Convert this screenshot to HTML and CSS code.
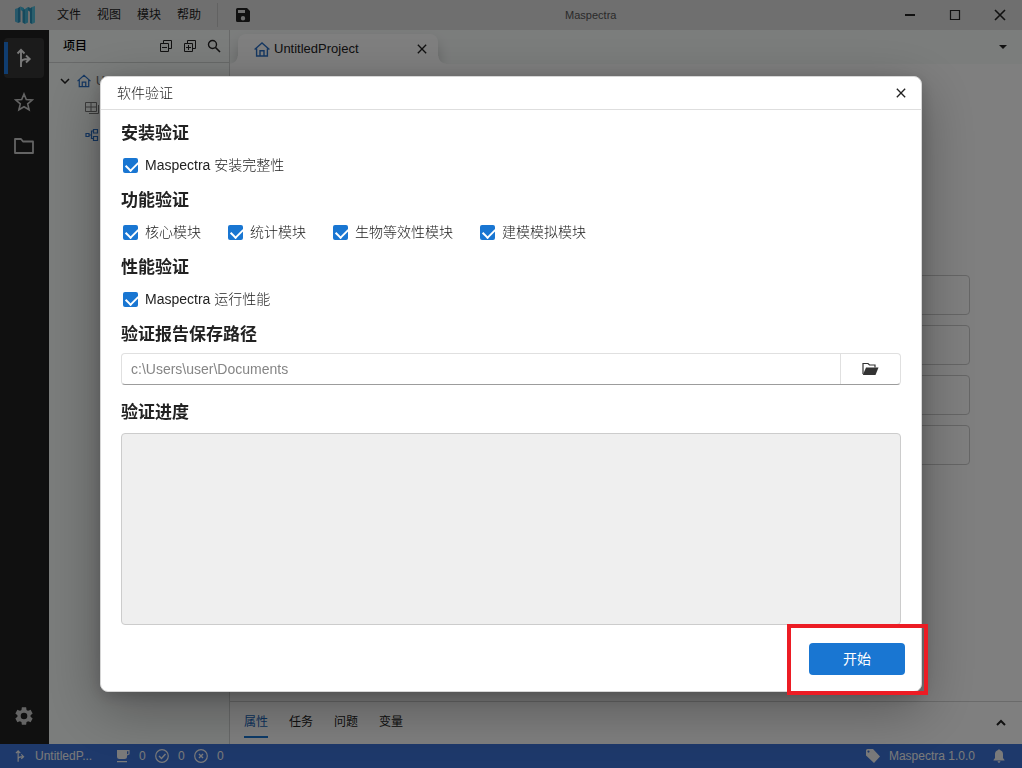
FILE: index.html
```html
<!DOCTYPE html>
<html lang="zh-CN">
<head>
<meta charset="utf-8">
<meta name="viewport" content="width=device-width, initial-scale=1">
<title>Maspectra</title>
<link rel="stylesheet" href="styles.css">
</head>
<body>
<svg class="sprite" aria-hidden="true">
  <symbol id="i-close" viewBox="0 0 12 12"><path d="M1 1l10 10M11 1L1 11" fill="none" stroke="currentColor" stroke-width="1.6"/></symbol>
  <symbol id="i-home" viewBox="0 0 16 15"><path d="M.6 7.600L8 1l7.400 6.600M2.600 6.400V14h10.800V6.400M6 14V8.700h4V14" fill="none" stroke="currentColor" stroke-width="1.400"/></symbol>
  <symbol id="i-branch" viewBox="0 0 16 20"><path d="M5 19V3M1.500 5.500L5 1.800l3.500 3.700M5 15c0-3 2-4 8-4M10 7.500l3.700 3.500-3.700 3.500" fill="none" stroke="currentColor" stroke-width="1.900"/></symbol>
</svg>

<div class="app">
  <header class="titlebar">
    <svg class="logo" viewBox="0 0 20 18" aria-hidden="true">
      <path d="M0 3l3-1v15l-3-1.500z" fill="#4fb0d4"/><path d="M3 2l2.500-1.500V16L3 17z" fill="#2a8cb8"/>
      <path d="M5.500.5L9 2v4L5.500 4z" fill="#3fb4d8"/>
      <path d="M7.500 4L10 3v15l-2.500-1.500z" fill="#2a94ba"/><path d="M10 3l3-2v15.500L10 18z" fill="#46b0d0"/>
      <path d="M13 1l2.500 1v4L13 4.500z" fill="#2a94ba"/>
      <path d="M15 2.500L17 1v17l-2-1z" fill="#2a90b8"/><path d="M17 1l3-1v16.500L17 18z" fill="#55bcd8"/>
    </svg>
    <nav class="menu" aria-label="主菜单">
      <button type="button">文件</button>
      <button type="button">视图</button>
      <button type="button">模块</button>
      <button type="button">帮助</button>
    </nav>
    <button class="save" type="button" aria-label="保存">
      <svg width="14" height="14" viewBox="0 0 14 14"><path fill="currentColor" fill-rule="evenodd" d="M1.500 0H11l3 3v9.500q0 1.500-1.500 1.500h-11Q0 14 0 12.500v-11Q0 0 1.500 0zM2 2v3h7V2zM7 8a2.200 2.200 0 1 0 0 4.400A2.200 2.200 0 0 0 7 8z"/></svg>
    </button>
    <h1 class="app-title">Maspectra</h1>
    <div class="window-buttons">
      <button type="button" aria-label="最小化"><svg width="12" height="12" viewBox="0 0 12 12"><path d="M1 6h10" stroke="currentColor" stroke-width="2"/></svg></button>
      <button type="button" aria-label="最大化"><svg width="12" height="12" viewBox="0 0 12 12"><path d="M1.500 1.500h9v9h-9z" fill="none" stroke="currentColor" stroke-width="1.200"/></svg></button>
      <button type="button" aria-label="关闭"><svg width="12" height="12"><use href="#i-close"/></svg></button>
    </div>
  </header>

  <div class="workspace">
    <nav class="rail" aria-label="侧边栏">
      <button class="rail-item active" type="button" aria-label="项目"><svg width="16" height="20"><use href="#i-branch"/></svg></button>
      <button class="rail-item" type="button" aria-label="收藏"><svg width="20" height="20" viewBox="0 0 20 20"><path d="M10 2l2.300 5.500 6 .5-4.600 3.900 1.400 5.900L10 14.700l-5.100 3.100 1.400-5.900L1.700 8l6-.5z" fill="none" stroke="currentColor" stroke-width="1.600"/></svg></button>
      <button class="rail-item" type="button" aria-label="文件夹"><svg width="20" height="16" viewBox="0 0 20 16"><path d="M1 1h6l2 2.500h10V15H1z" fill="none" stroke="currentColor" stroke-width="1.800" stroke-linejoin="round"/></svg></button>
      <button class="rail-item bottom" type="button" aria-label="设置"><svg width="22" height="22" viewBox="0 0 24 24"><path fill="currentColor" d="M19.140 12.940c.04-.3.060-.61.060-.94s-.02-.64-.07-.94l2.030-1.580c.18-.14.230-.41.120-.61l-1.920-3.320c-.12-.22-.37-.29-.59-.22l-2.390.96c-.5-.38-1.030-.7-1.620-.94l-.36-2.540c-.04-.24-.24-.41-.48-.41h-3.840c-.24 0-.43.17-.47.41l-.36 2.540c-.59.24-1.130.57-1.620.94l-2.390-.96c-.22-.08-.47 0-.59.22L2.740 8.870c-.12.210-.08.470.12.610l2.030 1.580c-.05.3-.09.630-.09.940s.02.640.07.940l-2.030 1.580c-.18.140-.23.410-.12.610l1.920 3.320c.12.220.370.290.590.220l2.390-.96c.5.380 1.030.7 1.620.94l.36 2.540c.05.240.240.410.480.410h3.840c.240 0 .440-.17.470-.41l.36-2.540c.590-.24 1.130-.56 1.620-.94l2.390.96c.220.080.470 0 .590-.22l1.920-3.320c.120-.22.070-.47-.12-.61zM12 15.600A3.600 3.600 0 1 1 12 8.400a3.600 3.600 0 0 1 0 7.200z"/></svg></button>
    </nav>

    <aside class="project">
      <div class="project-head">
        <h2>项目</h2>
        <div class="tools">
          <button type="button" aria-label="全部折叠"><svg width="14" height="14" viewBox="0 0 14 14"><path d="M4.500 4.500v-3h8v8h-3M1.500 4.500h8v8h-8zM3 8.500h5" fill="none" stroke="currentColor"/></svg></button>
          <button type="button" aria-label="全部展开"><svg width="14" height="14" viewBox="0 0 14 14"><path d="M4.500 4.500v-3h8v8h-3M1.500 4.500h8v8h-8zM3 8.500h5M5.500 6v5" fill="none" stroke="currentColor"/></svg></button>
          <button type="button" aria-label="搜索"><svg width="14" height="14" viewBox="0 0 14 14"><circle cx="5.500" cy="5.500" r="4" fill="none" stroke="currentColor" stroke-width="1.400"/><path d="M8.500 8.500l4.500 4.500" stroke="currentColor" stroke-width="1.600"/></svg></button>
        </div>
      </div>
      <ul class="tree">
        <li class="tree-root"><svg width="10" height="6" viewBox="0 0 10 6"><path d="M1 1l4 4 4-4" fill="none" stroke="currentColor" stroke-width="1.500"/></svg><svg class="blue" width="14" height="14"><use href="#i-home"/></svg><span>U</span></li>
        <li class="tree-leaf"><svg width="15" height="14" viewBox="0 0 15 14"><path d="M.5 1.500h11v9H.5zM.5 6h11M6 1.500v9M13.500 4v8.500H4" fill="none" stroke="#777"/></svg></li>
        <li class="tree-leaf"><svg class="blue" width="15" height="14" viewBox="0 0 15 14"><path d="M1 5.500h3v3H1zM8.500 1.500h4V5h-4zM8.500 8.500h4v4h-4zM4 7h2.500M8.500 3h-2v7.500h2" fill="none" stroke="currentColor" stroke-width="1.200"/></svg></li>
      </ul>
    </aside>

    <main class="editor">
      <div class="tabs">
        <div class="tab">
          <svg class="blue" width="16" height="15"><use href="#i-home"/></svg>
          <span>UntitledProject</span>
          <button type="button" aria-label="关闭标签页"><svg width="10" height="10"><use href="#i-close"/></svg></button>
        </div>
        <button class="more" type="button" aria-label="更多标签页"><svg width="8" height="4" viewBox="0 0 8 4"><path d="M0 0h8L4 4z" fill="currentColor"/></svg></button>
      </div>
      <div class="cards">
        <div class="card"></div>
        <div class="card"></div>
        <div class="card"></div>
        <div class="card"></div>
      </div>
      <div class="bottom-panel">
        <button class="selected" type="button">属性</button>
        <button type="button">任务</button>
        <button type="button">问题</button>
        <button type="button">变量</button>
        <button class="expand" type="button" aria-label="展开面板"><svg width="10" height="7" viewBox="0 0 10 7"><path d="M1 6l4-4 4 4" fill="none" stroke="currentColor" stroke-width="2"/></svg></button>
      </div>
    </main>
  </div>

  <footer class="status">
    <svg width="10" height="14" viewBox="0 0 16 20"><use href="#i-branch"/></svg>
    <span class="status-name">UntitledP...</span>
    <div class="counts">
      <svg width="14" height="14" viewBox="0 0 14 14"><path d="M1 1h10v6.500Q11 10 8.500 10h-5Q1 10 1 7.500zM1 12h10v1.200H1z" fill="currentColor"/><path d="M10 1.600h3V5l-2 1" fill="none" stroke="currentColor" stroke-width="1.200"/></svg>
      <span>0</span>
      <svg width="14" height="14" viewBox="0 0 14 14"><path d="M4 7l2.500 2.500L10.500 5" fill="none" stroke="currentColor" stroke-width="1.400"/><circle cx="7" cy="7" r="6.300" fill="none" stroke="currentColor" stroke-width="1.200"/></svg>
      <span>0</span>
      <svg width="14" height="14" viewBox="0 0 14 14"><path d="M5 5l4 4M9 5L5 9" fill="none" stroke="currentColor" stroke-width="1.400"/><circle cx="7" cy="7" r="6.300" fill="none" stroke="currentColor" stroke-width="1.200"/></svg>
      <span>0</span>
    </div>
    <div class="version">
      <svg width="14" height="14" viewBox="0 0 14 14"><path fill="currentColor" fill-rule="evenodd" d="M0 1.500Q0 0 1.500 0H7l7 7.500L8 14 0 6.500zM2.500 1.500a1.100 1.100 0 1 0 0 2.200 1.100 1.100 0 0 0 0-2.200z"/></svg>
      <span>Maspectra 1.0.0</span>
    </div>
    <svg width="12" height="14" viewBox="0 0 12 14"><path fill="currentColor" d="M5 1q1-1.500 2 0 3 1 3 4v4l1.500 2v.5H.5V11L2 9V5q0-3 3-4zM4.500 12.300h3Q7 13.800 6 13.800t-1.500-1.500z"/></svg>
  </footer>
</div>

<div class="overlay">
  <form class="dialog" role="dialog" aria-modal="true" aria-labelledby="dialog-title">
    <div class="dialog-head">
      <h2 id="dialog-title">软件验证</h2>
      <button type="button" aria-label="关闭"><svg width="10" height="10"><use href="#i-close"/></svg></button>
    </div>
    <div class="dialog-body">
      <fieldset>
        <legend>安装验证</legend>
        <div class="checks"><label><input type="checkbox" checked>Maspectra 安装完整性</label></div>
      </fieldset>
      <fieldset>
        <legend>功能验证</legend>
        <div class="checks">
          <label><input type="checkbox" checked>核心模块</label>
          <label><input type="checkbox" checked>统计模块</label>
          <label><input type="checkbox" checked>生物等效性模块</label>
          <label><input type="checkbox" checked>建模模拟模块</label>
        </div>
      </fieldset>
      <fieldset>
        <legend>性能验证</legend>
        <div class="checks"><label><input type="checkbox" checked>Maspectra 运行性能</label></div>
      </fieldset>
      <label class="heading" for="path">验证报告保存路径</label>
      <div class="path">
        <input id="path" type="text" value="c:\Users\user\Documents">
        <button type="button" aria-label="选择文件夹"><svg width="17" height="14" viewBox="0 0 17 14"><path d="M1 12V1.500h5L7.500 3H13v2.500" fill="none" stroke="currentColor" stroke-width="1.200"/><path d="M4 5.500h12.500L13.500 13H.8z" fill="currentColor"/></svg></button>
      </div>
      <label class="heading" for="progress">验证进度</label>
      <textarea id="progress" class="progress" readonly></textarea>
    </div>
    <div class="dialog-foot">
      <div class="start">
        <button type="button">开始</button>
        <span class="highlight"></span>
      </div>
    </div>
  </form>
</div>
</body>
</html>
```
FILE: styles.css
```css
* { box-sizing: border-box; }

body {
  margin: 0;
  font: 12px/16px "Liberation Sans", "Noto Sans CJK SC", sans-serif;
  color: #222;
}

button {
  display: flex;
  align-items: center;
  justify-content: center;
  margin: 0;
  padding: 0;
  border: 0;
  background: none;
  color: inherit;
  font: inherit;
}

h1, h2, ul, fieldset { margin: 0; padding: 0; }
svg { flex: none; }
.sprite { position: absolute; width: 0; height: 0; }
.blue { color: #2a6fc4; }

.app {
  display: grid;
  grid-template-rows: 30px 1fr 24px;
  min-height: 100vh;
}

/* Title bar */
.titlebar {
  display: grid;
  grid-template-columns: auto auto auto 1fr auto;
  align-items: center;
  padding-left: 15px;
  background: #dedede;
}
.logo { width: 20px; height: 18px; }
.menu {
  display: flex;
  gap: 16px;
  margin-left: 22px;
  padding-right: 16px;
}
.save {
  height: 24px;
  padding-left: 18px;
  border-left: 1px solid #c4c4c4;
}
.app-title {
  padding-left: 315px;
  font-size: 11px;
  font-weight: 400;
  color: #555;
}
.window-buttons { display: flex; }
.window-buttons button { width: 45px; height: 30px; }

.workspace {
  display: grid;
  grid-template-columns: 49px 181px 1fr;
}

/* Icon rail */
.rail {
  display: flex;
  flex-direction: column;
  gap: 4px;
  padding: 8px 5px 8px 4px;
  background: #202020;
  color: #c8c8c8;
}
.rail-item { height: 40px; border-radius: 4px; }
.rail-item.active {
  background: linear-gradient(#207be0, #207be0) 0 50% / 4px 32px no-repeat, #363636;
  color: #f4f4f4;
}
.rail-item.bottom { margin-top: auto; }

/* Project tree */
.project {
  border-right: 1px solid #d0d3d2;
  background: #f7faf9;
}
.project-head {
  display: flex;
  align-items: center;
  justify-content: space-between;
  height: 33px;
  padding: 0 8px 0 14px;
  border-bottom: 1px solid #d0d3d2;
}
.project-head h2 { font-size: 12px; font-weight: 500; color: #000; }
.tools { display: flex; gap: 10px; }
.tree { list-style: none; padding-top: 4px; }
.tree li { display: flex; align-items: center; height: 27px; }
.tree-root { gap: 7px; padding-left: 11px; }
.tree-root span { margin-left: -2px; color: #666; }
.tree-leaf { padding-left: 36px; }

/* Editor */
.editor {
  display: flex;
  flex-direction: column;
  background: #fff;
}
.tabs {
  display: flex;
  justify-content: space-between;
  height: 34px;
  padding: 4px 15px 0 8px;
  overflow: hidden;
  background: #f7faf9;
}
.tab {
  position: relative;
  display: flex;
  align-items: center;
  gap: 4px;
  width: 200px;
  padding: 0 11px 0 16px;
  border-radius: 8px 8px 0 0;
  background: #fff;
  box-shadow: 0 8px 14px rgba(0, 0, 0, 0.2);
  font-size: 13px;
}
.tab::before,
.tab::after {
  content: "";
  position: absolute;
  bottom: 0;
  width: 8px;
  height: 8px;
}
.tab::before { right: 100%; background: radial-gradient(circle at 0 0, transparent 7px, #fff 8px); }
.tab::after { left: 100%; background: radial-gradient(circle at 100% 0, transparent 7px, #fff 8px); }
.tab button { margin-left: auto; }
.more { height: 26px; }
.cards {
  flex: 1;
  display: flex;
  flex-direction: column;
  gap: 10px;
  padding: 211px 52px 0;
}
.card { height: 40px; border: 1px solid #ccc; border-radius: 4px; }
.bottom-panel {
  display: flex;
  gap: 21px;
  height: 43px;
  padding: 0 16px 6px 14px;
  border-top: 1px solid #d4d4d4;
}
.bottom-panel button {
  padding-top: 6px;
  border-bottom: 2px solid transparent;
}
.bottom-panel .selected { border-color: #1976d2; color: #1765b8; }
.bottom-panel .expand { margin-left: auto; }

/* Status bar */
.status {
  display: flex;
  align-items: center;
  padding: 0 17px 0 15px;
  background: #3c72d6;
  color: #f4f4f4;
}
.status-name { width: 72px; margin-left: 10px; }
.counts { display: flex; align-items: center; gap: 9px; margin-left: 9px; }
.counts span { width: 7px; }
.version { display: flex; align-items: center; gap: 9px; margin: 0 18px 0 auto; }

/* Validation dialog */
.overlay {
  position: fixed;
  inset: 0;
  display: flex;
  align-items: center;
  justify-content: center;
  padding: 0 100px;
  background: rgba(0, 0, 0, 0.5);
}
.dialog {
  flex: 1;
  border: 1px solid #d6d6d6;
  border-radius: 8px;
  background: #fff;
  box-shadow: 0 16px 56px rgba(0, 0, 0, 0.32), 0 4px 16px rgba(0, 0, 0, 0.18);
  font-size: 14px;
  font-weight: 300;
  line-height: 22px;
}
.dialog-head {
  display: flex;
  align-items: center;
  justify-content: space-between;
  height: 33px;
  padding: 0 15px 0 16px;
  border-bottom: 1px solid #dedede;
}
.dialog-head h2 { font-size: 14px; font-weight: 300; }
.dialog-body { padding: 11px 20px 0; }

fieldset { min-width: 0; margin-bottom: 12px; border: 0; }
legend,
.heading {
  display: block;
  padding: 0;
  font-size: 17px;
  font-weight: 700;
  line-height: 26px;
}
.checks { display: flex; flex-wrap: wrap; gap: 27px; padding: 7px 0 0 2px; }
.checks label { display: flex; align-items: center; gap: 7px; }
.checks input {
  appearance: none;
  width: 15px;
  height: 15px;
  margin: 0;
  border-radius: 2px;
  background: #1976d2;
}
.checks input:checked::before {
  content: "";
  display: block;
  width: 10px;
  height: 6px;
  margin: 3px 0 0 3px;
  border: solid #fff;
  border-width: 0 0 2px 2px;
  transform: rotate(-45deg);
}

.path {
  display: flex;
  height: 32px;
  margin: 5px 0 15px;
  border: 1px solid #e0e0e0;
  border-bottom-color: #9c9c9c;
  border-radius: 4px;
}
.path input {
  flex: 1;
  min-width: 0;
  padding: 0 9px;
  border: 0;
  background: none;
  color: #858585;
  font: inherit;
}
.path button {
  width: 60px;
  border-left: 1px solid #e0e0e0;
  color: #333;
}
.progress {
  display: block;
  width: 100%;
  height: 192px;
  margin-top: 7px;
  border: 1px solid #ccc;
  border-radius: 4px;
  background: #efefef;
  resize: none;
}
.dialog-foot {
  display: flex;
  justify-content: flex-end;
  padding: 18px 16px 16px;
}
.start { position: relative; }
.start button {
  width: 96px;
  height: 32px;
  border-radius: 4px;
  background: #1976d2;
  color: #fff;
  font-weight: 400;
}
.highlight {
  position: absolute;
  inset: -19px -23px -20px -22px;
  border: 4px solid #ec1c24;
  pointer-events: none;
}
```
